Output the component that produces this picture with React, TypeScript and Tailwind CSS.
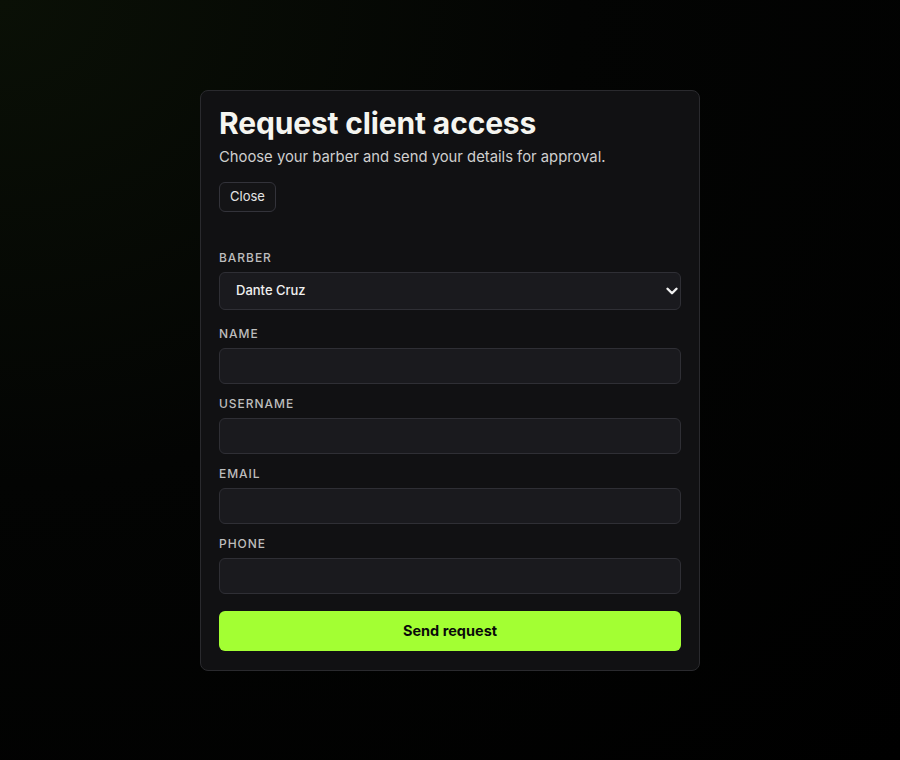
import { ChevronDown } from "lucide-react";

const fields = ["Name", "Username", "Email", "Phone"];

function Label({ children }: { children: string }) {
  return (
    <label className="block text-[12px] font-medium uppercase leading-[14px] tracking-[0.08em] text-[#bdbdbd]">
      {children}
    </label>
  );
}

export default function App() {
  return (
    <div
      className="flex min-h-[760px] w-full justify-center bg-[radial-gradient(ellipse_at_0%_0%,#0a1006_0%,#030403_45%,#000000_100%)] pt-[90px]"
      style={{ fontFamily: "Inter, 'Noto Sans', sans-serif" }}
    >
      <div className="flex h-fit w-[500px] flex-col rounded-lg border border-[#2a2a2e] bg-[#111113] px-[18px] pb-[19px] pt-[14px]">
        <h1 className="text-[30px] font-bold leading-[36px] tracking-[-0.005em] text-[#f5f5f0]">
          Request client access
        </h1>
        <p className="mt-[6px] text-[14.8px] leading-[20px] text-[#cfcfcf]">
          Choose your barber and send your details for approval.
        </p>
        <div className="mt-[15px]">
          <button className="h-[30px] rounded-md border border-[#33333a] bg-[#141416] px-[10px] text-[13px] text-[#e5e5e5]">
            Close
          </button>
        </div>

        <div className="mt-[39px] flex flex-col gap-[7px]">
          <Label>Barber</Label>
          <div className="relative">
            <select className="h-[38px] w-full appearance-none rounded-md border border-[#2f2f35] bg-[#1a1a1e] px-[16px] text-[13px] font-medium text-[#f0f0f0] outline-none">
              <option>Dante Cruz</option>
            </select>
            <ChevronDown
              size={18}
              strokeWidth={3.2}
              className="pointer-events-none absolute right-0 top-1/2 -translate-y-1/2 text-[#f0f0f0]"
            />
          </div>
        </div>

        {fields.map((f, i) => (
          <div
            key={f}
            className={`${i === 0 ? "mt-[17px]" : "mt-[13px]"} flex flex-col gap-[7px]`}
          >
            <Label>{f}</Label>
            <input className="h-[36px] w-full rounded-md border border-[#2f2f35] bg-[#1a1a1e] px-[12px] text-[13px] text-[#f0f0f0] outline-none" />
          </div>
        ))}

        <button className="mt-[17px] h-[40px] w-full rounded-md bg-[#a3ff33] text-[14.5px] font-bold text-[#0a0a0a]">
          Send request
        </button>
      </div>
    </div>
  );
}
